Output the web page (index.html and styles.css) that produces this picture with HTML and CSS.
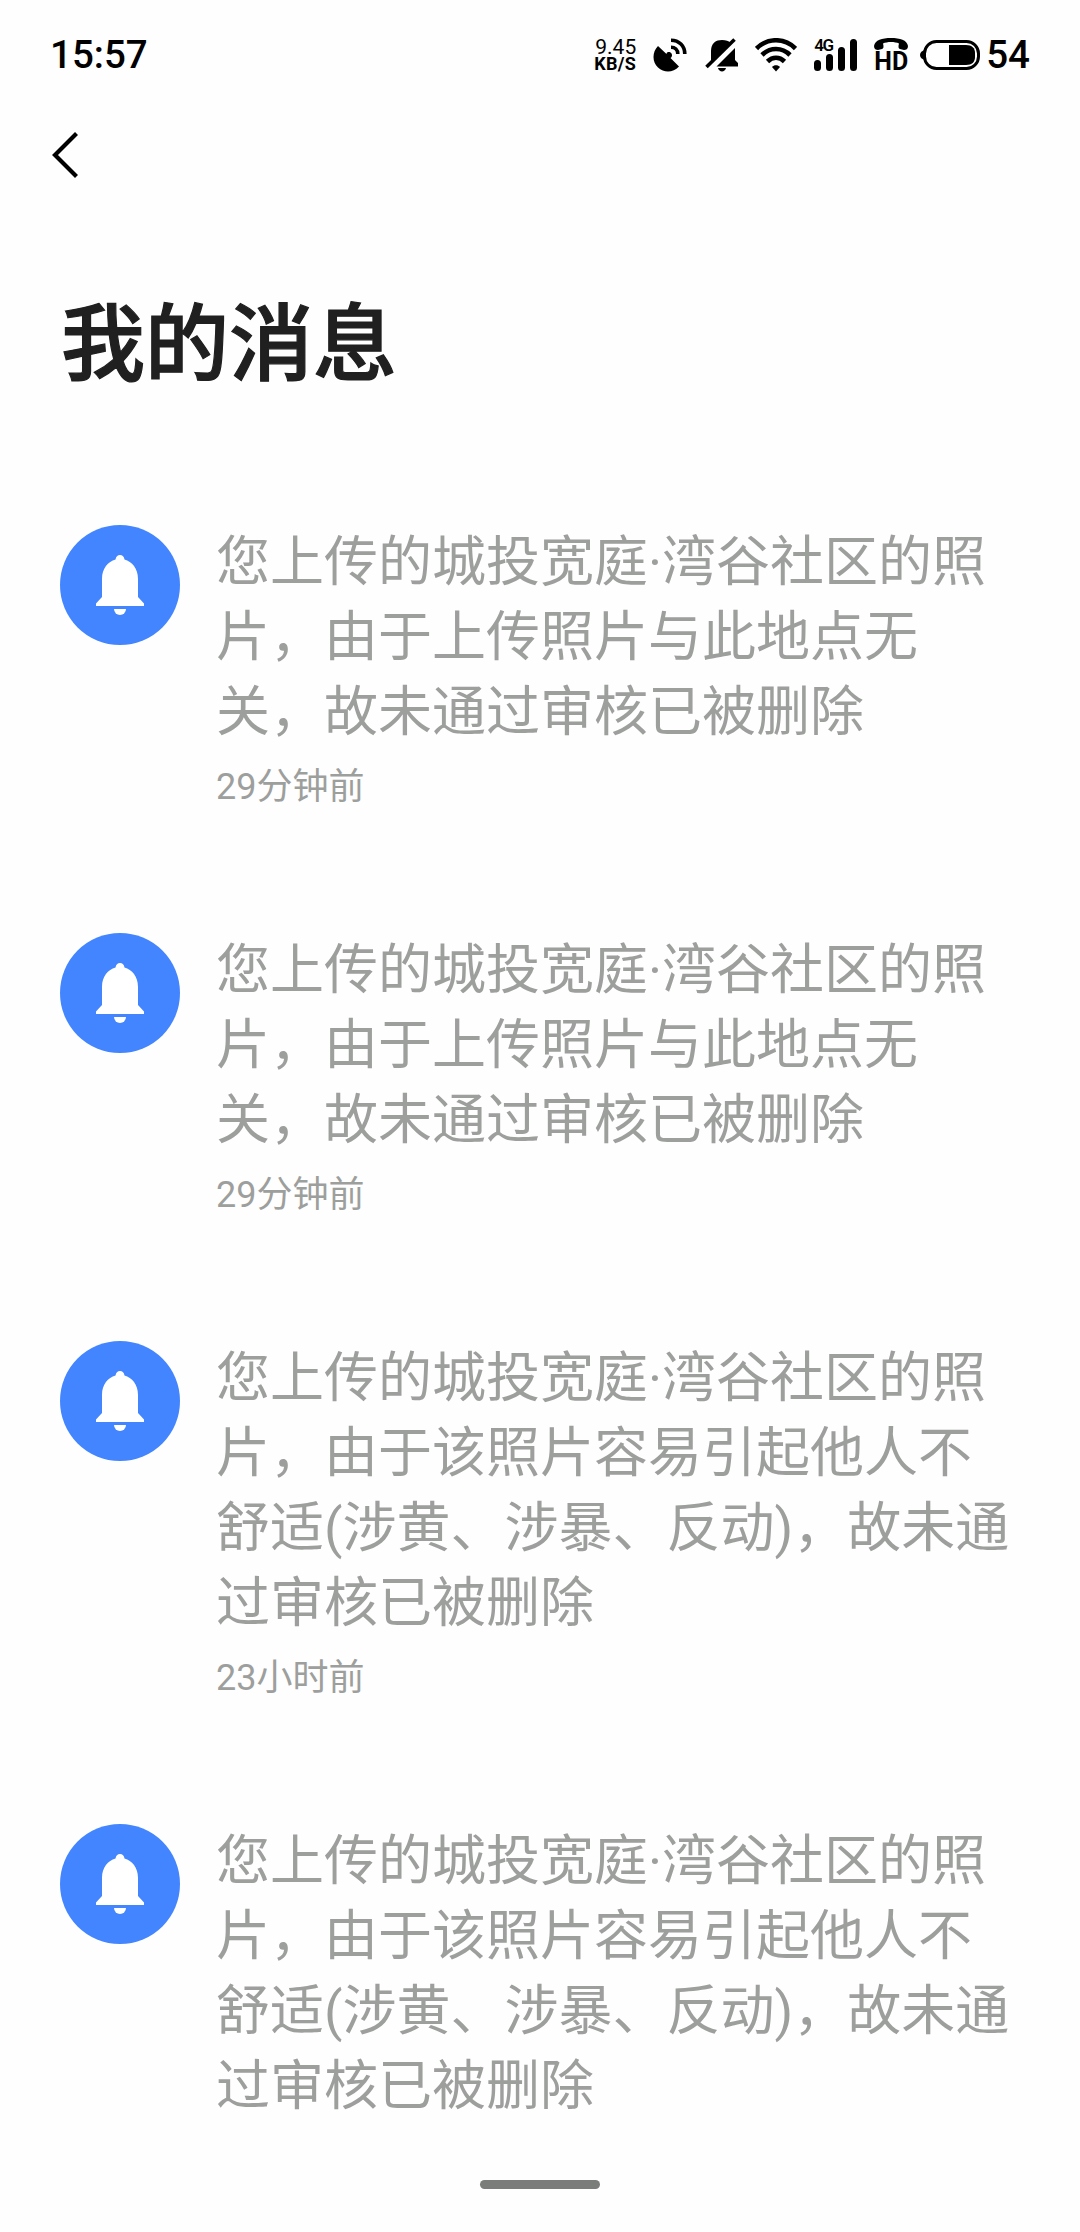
FILE: index.html
```
<!DOCTYPE html>
<html lang="zh-CN">

<head>
    <meta charset="UTF-8">
    <meta name="viewport" content="width=device-width, initial-scale=1.0">
    <title>我的消息</title>
    <link rel="stylesheet" href="styles.css">
</head>

<body>
    <!-- shared bell icon -->
    <svg class="symbols" width="0" height="0">
        <symbol id="bell" viewBox="0 0 120 120">
            <path d="M36 78.500L42 72V54C42 43 48 37 55.500 34.500C56 31.500 57.500 30 60 30S64 31.500 64.500 34.500C72 37 78 43 78 54V72L84 78.500V81H36Z" />
            <path d="M54 84H66A6 6 0 0 1 54 84Z" />
        </symbol>
    </svg>

    <div class="status-bar">
        <span class="clock">15:57</span>
        <div class="speed">
            <span class="speed-value">9.45</span>
            <span class="speed-unit">KB/S</span>
        </div>
        <svg class="icon-satellite" width="34" height="34" viewBox="0 0 34 34">
            <path d="M5 8L13.500 16C13.500 14 16 13.500 17.500 14.500C19.500 16 19.500 18.500 17.500 20L26 28.500C20 35 11 35 5 29.500C-1 24 -1 14 5 8Z" />
            <path d="M18 2.200C26 2.200 31.800 8 31.800 16M18 9.200C22 9.200 24.800 12 24.800 16" fill="none" stroke="#000" stroke-width="3.600" />
        </svg>
        <svg class="icon-mute" width="34" height="34" viewBox="0 0 34 34">
            <path d="M6 22V13C6 5 11 2 17 2C21 2 23.500 3 25.500 4.500L6.500 23.500Z" />
            <path d="M30 10V22L33 25V28.500H11.500L30 10Z" />
            <path d="M13 30H21C20 34.500 14 34.500 13 30Z" />
            <path d="M1.500 29L29.500 1.500" stroke="#000" stroke-width="3.600" />
        </svg>
        <svg class="icon-wifi" width="42" height="34" viewBox="0 0 42 34">
            <g fill="none" stroke="#000" stroke-width="4.600">
                <path d="M1.500 10.500C12.500 -.5 29.500 -.5 40.500 10.500" />
                <path d="M7 17C15 9 27 9 35 17" />
                <path d="M12.500 23.500C17.500 18.500 24.500 18.500 29.500 23.500" />
            </g>
            <path d="M17 29C19 26.800 23 26.800 25 29L21 33.500Z" />
        </svg>
        <div class="signal">
            <span class="signal-type">4G</span>
            <svg width="44" height="34" viewBox="0 0 44 34">
                <g stroke="#000" stroke-width="7" stroke-linecap="round">
                    <path d="M3.500 25.500V29.500M15.500 19.500V29.500M27.500 12.500V29.500M39.500 4.500V29.500" />
                </g>
            </svg>
        </div>
        <div class="volte">
            <svg width="34" height="14" viewBox="0 0 34 14">
                <path d="M0 9C1 3 8 1 17 1S33 3 34 9C34 12 32 13 30 13L26 12C24.500 11.500 24 10 25 6.500C21 4.500 13 4.500 9 6.500C10 10 9.500 11.500 8 12L4 13C2 13 0 12 0 9Z" />
            </svg>
            <span class="volte-label">HD</span>
        </div>
        <svg class="icon-battery" width="60" height="32" viewBox="0 0 60 32">
            <rect x="4.500" y="2.500" width="54" height="27" rx="12" fill="none" stroke="#000" stroke-width="3" />
            <path d="M5 11C2 11.500 0 13.500 0 16S2 20.500 5 21Z" />
            <path d="M29 6H46C52 6 55 9 55 14V18C55 23 52 26 46 26H29Z" />
        </svg>
        <span class="battery-level">54</span>
    </div>

    <div class="nav-bar">
        <svg width="28" height="48" viewBox="0 0 28 48">
            <path d="M25.500 2.500L4 24L25.500 45.500" fill="none" stroke="#000" stroke-width="4.200" />
        </svg>
    </div>

    <h1 class="page-title">我的消息</h1>

    <div class="message-list">
        <div class="message">
            <svg class="avatar"><use href="#bell" /></svg>
            <div class="message-body">
                <p class="message-text">您上传的城投宽庭·湾谷社区的照<br>片，由于上传照片与此地点无<br>关，故未通过审核已被删除</p>
                <p class="message-time">29分钟前</p>
            </div>
        </div>
        <div class="message">
            <svg class="avatar"><use href="#bell" /></svg>
            <div class="message-body">
                <p class="message-text">您上传的城投宽庭·湾谷社区的照<br>片，由于上传照片与此地点无<br>关，故未通过审核已被删除</p>
                <p class="message-time">29分钟前</p>
            </div>
        </div>
        <div class="message">
            <svg class="avatar"><use href="#bell" /></svg>
            <div class="message-body">
                <p class="message-text">您上传的城投宽庭·湾谷社区的照<br>片，由于该照片容易引起他人不<br>舒适(涉黄、涉暴、反动)，故未通<br>过审核已被删除</p>
                <p class="message-time">23小时前</p>
            </div>
        </div>
        <div class="message">
            <svg class="avatar"><use href="#bell" /></svg>
            <div class="message-body">
                <p class="message-text">您上传的城投宽庭·湾谷社区的照<br>片，由于该照片容易引起他人不<br>舒适(涉黄、涉暴、反动)，故未通<br>过审核已被删除</p>
            </div>
        </div>
    </div>

    <div class="home-indicator"></div>
</body>

</html>
```
FILE: styles.css
```
* {
    box-sizing: border-box;
}

body {
    margin: 0;
    height: 2232px;
    overflow: hidden;
    display: flex;
    flex-direction: column;
    background-color: #fefefe;
    color: #000;
    font-family: Roboto, "Noto Sans CJK SC", sans-serif;
}

svg {
    display: block;
    flex: none;
}

.symbols {
    position: absolute;
}

.status-bar {
    display: flex;
    align-items: center;
    height: 109px;
    padding: 0 50px 0 50px;
}

.clock,
.battery-level {
    font-size: 38.5px;
    font-weight: 500;
    line-height: 44px;
}

.clock {
    margin-right: auto;
}

.speed {
    display: flex;
    flex-direction: column;
    width: 44px;
    margin-right: 15px;
}

.speed-value {
    padding-left: 1px;
    font-size: 21px;
    line-height: 18px;
}

.speed-unit {
    font-size: 18px;
    font-weight: 700;
    line-height: 16px;
    letter-spacing: 0.3px;
}

.icon-satellite {
    margin-right: 18px;
}

.icon-mute {
    margin-right: 16px;
}

.icon-wifi {
    margin-right: 17px;
}

.signal {
    position: relative;
    margin-right: 16px;
}

.signal-type {
    position: absolute;
    top: 0;
    left: 0;
    font-size: 17px;
    font-weight: 600;
    line-height: 14px;
    letter-spacing: -1.5px;
}

.volte {
    display: flex;
    flex-direction: column;
    align-items: center;
    width: 34px;
    margin-right: 12px;
}

.volte-label {
    font-size: 25px;
    font-weight: 700;
    line-height: 22px;
}

.icon-battery {
    margin-right: 6px;
}

.nav-bar {
    display: flex;
    align-items: center;
    height: 91px;
    padding-left: 51px;
}

.page-title {
    margin: 86px 0 0 61px;
    font-size: 84px;
    font-weight: 500;
    line-height: 120px;
    color: #202020;
    -webkit-text-stroke: 1.2px #202020;
}

.message-list {
    display: flex;
    flex-direction: column;
    gap: 108px;
    padding: 119px 60px 0;
}

.message {
    display: flex;
    gap: 36px;
}

.avatar {
    width: 120px;
    height: 120px;
    border-radius: 50%;
    background-color: #4285ff;
    fill: #fff;
}

.message-body {
    flex: 1;
    color: #9d9f9d;
}

.message-text {
    margin: 0;
    font-size: 54px;
    line-height: 75px;
    white-space: nowrap;
}

.message-time {
    margin: 7px 0 8px;
    font-size: 36px;
    line-height: 60px;
}

.home-indicator {
    position: absolute;
    left: 480px;
    top: 2180px;
    width: 120px;
    height: 9px;
    border-radius: 5px;
    background-color: #7b7d7b;
}
```
